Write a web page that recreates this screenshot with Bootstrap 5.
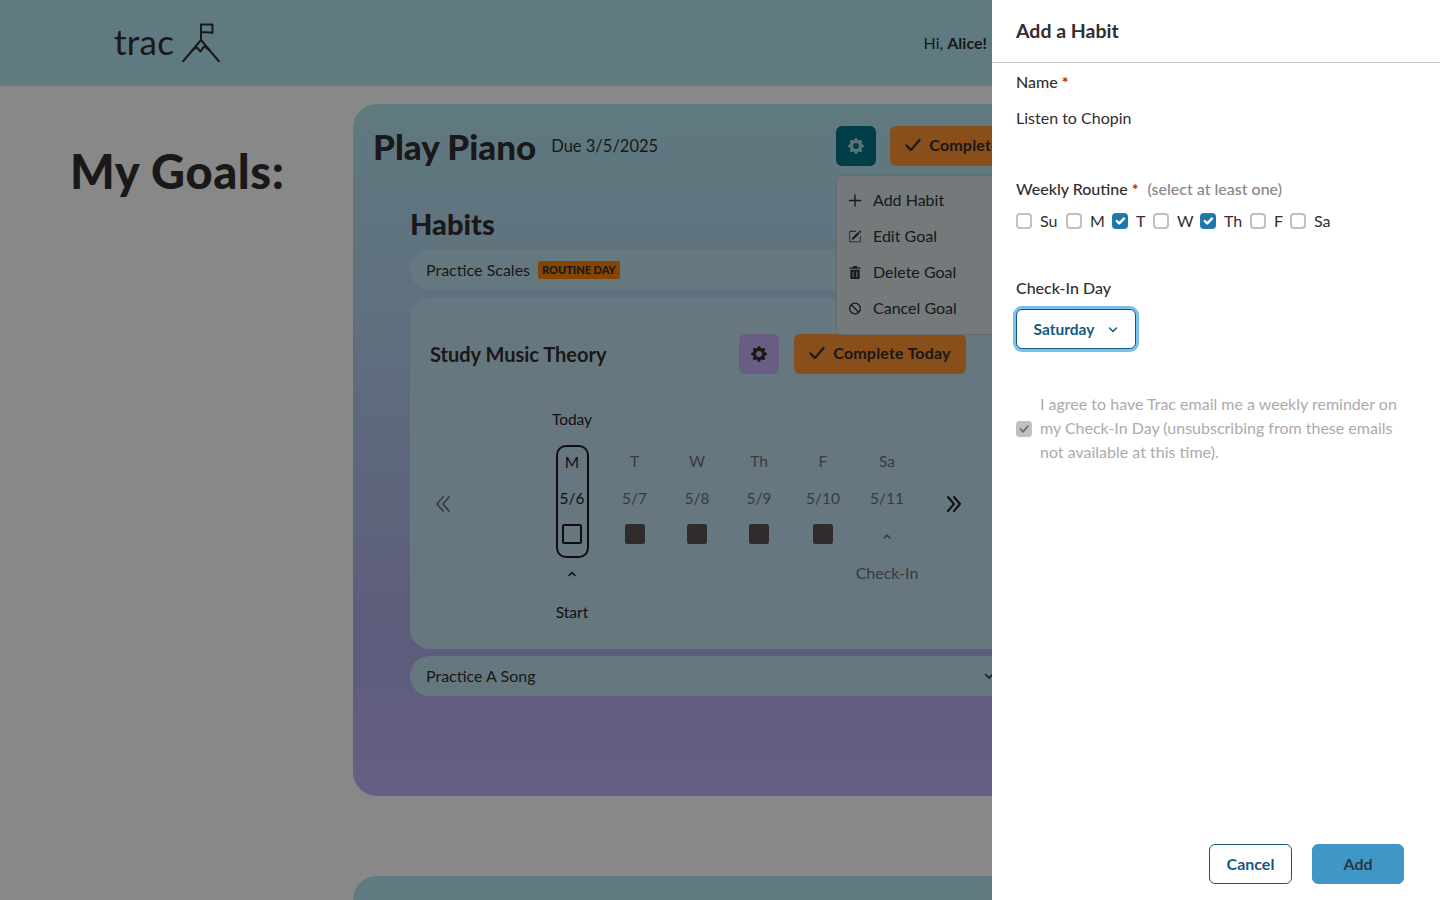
<!DOCTYPE html>
<html lang="en">
<head>
  <meta charset="UTF-8">
  <meta name="viewport" content="width=device-width, initial-scale=1.0">
  <title>Trac - My Goals</title>
  <link href="https://cdn.jsdelivr.net/npm/bootstrap@5.3.0/dist/css/bootstrap.min.css" rel="stylesheet">
  <style>
    body { font-family: "Lato", "Liberation Sans", sans-serif; color: #322e2e; background: #fff; overflow: hidden; height: 900px; }
    .top-bar { height: 86px; background: #b2e5f0; padding-left: 114px; padding-right: 453px; }
    .logo-text { font-size: 35px; line-height: 1; letter-spacing: .3px; margin: -3px 8px 0 0; }
    .logo-mark { margin-top: -2px; }
    .main-wrap { height: 814px; overflow: hidden; }
    .goals-side { width: 353px; padding: 60px 0 0 70px; flex-shrink: 0; }
    .goals-side h1 { font-size: 47px; font-weight: 900; line-height: 50px; margin: 0; color: #322e2e; letter-spacing: .6px; }
    .goal-box { width: 729px; height: 692px; margin-top: 18px; border-radius: 24px; padding: 22px 20px; background: linear-gradient(180deg, #b2e5f0 0%, #b2d2ec 30%, #b0ace8 78%, #bcb4f8 100%); position: relative; }
    .goal-box + .goal-box { height: 100px; margin-top: 80px; background: #b2e5f0; }
    .goal-title { font-size: 35px; font-weight: 900; line-height: 40px; margin: 0; }
    .due-text { font-size: 16.500px; margin-left: 15px; line-height: 40px; }
    .gear-btn { width: 40px; height: 40px; padding: 0; border: 0; border-radius: 6px; display: flex; align-items: center; justify-content: center; }
    .gear-teal { background: #007688; color: #a8dbe2; }
    .gear-purple { background: #c4b0f8; color: #322e2e; }
    .done-btn { height: 40px; width: 172px; border: 0; border-radius: 6px; background: #ff9432; color: #322e2e; font-weight: 700; font-size: 16px; padding: 0 0 2px; letter-spacing: .2px; }
    .btn-pair { gap: 14px; }
    .btn-pair-sub { gap: 15px; }
    .goal-menu { position: absolute; left: 483px; top: 71px; width: 200px; height: 160px; background: #d9e4e9; border: 1px solid #c2c8cb; border-radius: 6px; padding: 6px 0; z-index: 2; }
    .goal-menu div { height: 36px; padding-left: 11px; display: flex; align-items: center; gap: 11px; font-size: 16px; }
    .goal-menu svg { width: 14px; height: 13px; flex-shrink: 0; }
    .habit-area { margin: 41px 52px 0 37px; }
    .habit-area h2 { font-size: 29px; font-weight: 900; line-height: 34px; margin: 0 0 9px; }
    .habit-pill { height: 40px; border-radius: 20px; background: #bee1ee; padding: 0 16px; font-size: 16px; }
    .day-badge { background: #fc8400; color: #322e2e; font-size: 11px; font-weight: 900; line-height: 18px; padding: 0 4px; margin-left: 8px; border-radius: 2px; }
    .habit-open { height: 351px; margin: 8px 0 7px; border-radius: 20px; background: #c0dfee; padding: 36px 44px 0 20px; }
    .habit-open h3 { font-size: 20px; font-weight: 700; margin: 0; }
    .cal-row { margin-top: 33px; }
    .cal-arrow { margin-top: 87px; width: 16px; height: 20px; flex-shrink: 0; }
    .cal-prev { margin-left: 5px; }
    .cal-grid { display: grid; grid-template-columns: 62px 63px 62px 62px 66px 62px; margin: 0 28px 0 90px; }
    .cal-col { display: flex; flex-direction: column; align-items: center; line-height: 24px; font-size: 15.500px; color: #6a7078; white-space: nowrap; }
    .cal-col.other-day { padding-top: 42px; }
    .cal-col .day-name { margin-bottom: 13px; }
    .cal-col .day-date { margin-bottom: 14px; }
    .day-square { width: 20px; height: 20px; background: #5a5353; border-radius: 2px; }
    .today-col { color: #1f1d1d; }
    .today-frame { width: 33px; height: 113px; margin-top: 14px; border: 2px solid #1f1d1d; border-radius: 10px; display: flex; flex-direction: column; align-items: center; padding-top: 3px; }
    .today-frame .day-name { margin-bottom: 12px; }
    .today-box { width: 20px; height: 20px; border: 2px solid #1f1d1d; border-radius: 2px; }
    .up-caret { width: 10px; height: 20px; display: block; }
    .caret-today { margin-top: 7px; }
    .start-label { margin-top: 15px; }
    .checkin-label { margin-top: 17px; font-size: 16px; }
    .panel-head { height: 63px; border-bottom: 1px solid #c8c8c8; padding: 0 24px; display: flex; align-items: center; }
    .panel-head h5 { font-size: 19.500px; font-weight: 700; margin: 0; color: #322e2e; }
    .offcanvas.habit-panel { width: 448px; border-left: 0; color: #322e2e; transform: none; visibility: visible; z-index: 1045; }
    .panel-body { padding: 7px 24px 0; flex-grow: 1; }
    .field-label { font-size: 16px; font-weight: 500; line-height: 24px; margin: 0; }
    .req-star { color: #d4101c; font-weight: 700; }
    .hint-text { color: #8c8585; margin-left: 5px; }
    .name-input { border: 0; padding: 0; font-size: 16px; line-height: 24px; height: 24px; width: 100%; margin: 12px 0 47px; color: #322e2e; outline: 0; display: block; }
    .day-check { width: 16px; height: 16px; margin: 0; border: 2px solid #c4bfbf; border-radius: 3px; flex-shrink: 0; }
    .day-check:checked { background-color: #1f78aa; border: 0; }
    .day-line { margin: 8px 0 43px; height: 24px; font-size: 16px; }
    .day-line label { margin: 0 0 0 8px; }
    .w-su { width: 26px; } .w-m { width: 22px; } .w-t { width: 17px; } .w-w { width: 23px; } .w-th { width: 26px; } .w-f { width: 16px; }
    .check-btn { width: 120px; height: 40px; margin-top: 9px; padding: 1px 0 0; border: 1px solid #125a82; border-radius: 6px; background: #fff; color: #125a82; font-weight: 700; font-size: 15.500px; box-shadow: 0 0 0 3px #7cc0ee; display: flex; align-items: center; justify-content: center; gap: 14px; }
    .agree-row { margin-top: 43px; color: #aeaaaa; font-size: 16px; line-height: 24px; gap: 8px; }
    .agree-check.form-check-input { width: 16px; height: 16px; margin: 1px 0 0; flex-shrink: 0; background-color: #c4bfbf; border-color: #c4bfbf; opacity: 1; border-radius: 3px; }
    .agree-check.form-check-input:checked { background-image: url("data:image/svg+xml,%3csvg xmlns='http://www.w3.org/2000/svg' viewBox='0 0 20 20'%3e%3cpath fill='none' stroke='%23706a6a' stroke-linecap='round' stroke-linejoin='round' stroke-width='2.500' d='m5 10 3.500 4 7-8'/%3e%3c/svg%3e"); }
    .panel-foot { padding: 0 36px 16px 0; gap: 20px; }
    .foot-btn { height: 40px; border-radius: 6px; font-weight: 700; font-size: 16px; padding: 0 0 1px; }
    .foot-cancel { width: 83px; background: #fff; border: 1px solid #125a82; color: #125a82; }
    .foot-add { width: 92px; background: #3f97c8; border: 1px solid #3f97c8; color: #2b3840; }
    .dim-layer { position: fixed; inset: 0; z-index: 1040; background: rgba(0, 0, 0, .467); }
  </style>
</head>
<body>

<nav class="top-bar d-flex align-items-center justify-content-between">
  <a class="d-flex align-items-center text-decoration-none" href="#" style="color:#322e2e">
    <span class="logo-text">trac</span>
    <svg class="logo-mark" width="38" height="40" viewBox="0 0 38 40" fill="none" stroke="#322e2e" stroke-width="2" stroke-linecap="round" stroke-linejoin="round">
      <path d="M19 18V2.500h11.500v8.500c-3.500-1.500-7-.5-11.500-1"/>
      <path d="M1 39.500 19 18l18 21.500"/>
      <path d="m10 28.500 5-3 3.500 4 3.500-5 6 4"/>
    </svg>
  </a>
  <span class="hi-text">Hi, <b>Alice!</b></span>
</nav>

<div class="main-wrap d-flex">
  <div class="goals-side"><h1>My Goals:</h1></div>
  <div>
    <section class="goal-box">
      <div class="d-flex justify-content-between">
        <div class="d-flex">
          <h2 class="goal-title">Play Piano</h2>
          <span class="due-text">Due 3/5/2025</span>
        </div>
        <div class="d-flex btn-pair">
          <button class="gear-btn gear-teal" type="button">
            <svg width="16" height="16" viewBox="0 0 16 16" fill="currentColor"><path d="M9.405 1.050c-.413-1.400-2.397-1.400-2.810 0l-.100.340a1.464 1.464 0 0 1-2.105.872l-.310-.170c-1.283-.698-2.686.705-1.987 1.987l.169.311c.446.820.023 1.841-.872 2.105l-.340.100c-1.400.413-1.400 2.397 0 2.810l.340.100a1.464 1.464 0 0 1 .872 2.105l-.170.310c-.698 1.283.705 2.686 1.987 1.987l.311-.169a1.464 1.464 0 0 1 2.105.872l.100.340c.413 1.400 2.397 1.400 2.810 0l.100-.340a1.464 1.464 0 0 1 2.105-.872l.310.170c1.283.698 2.686-.705 1.987-1.987l-.169-.311a1.464 1.464 0 0 1 .872-2.105l.340-.100c1.400-.413 1.400-2.397 0-2.810l-.340-.100a1.464 1.464 0 0 1-.872-2.105l.170-.310c.698-1.283-.705-2.686-1.987-1.987l-.311.169a1.464 1.464 0 0 1-2.105-.872l-.100-.340zM8 10.930a2.929 2.929 0 1 1 0-5.860 2.929 2.929 0 0 1 0 5.858z"/></svg>
          </button>
          <button class="done-btn d-flex align-items-center justify-content-center gap-2" type="button">
            <svg width="16" height="14" viewBox="0 0 16 14" fill="none" stroke="currentColor" stroke-width="2.200" stroke-linecap="round" stroke-linejoin="round"><path d="m1.500 7.500 4.500 4.500 8.500-10"/></svg>
            Complete Today
          </button>
        </div>
      </div>

      <div class="goal-menu">
        <div><svg viewBox="0 0 14 14" fill="none" stroke="currentColor" stroke-width="1.500" stroke-linecap="round"><path d="M7 1v12M1 7h12"/></svg>Add Habit</div>
        <div><svg viewBox="0 0 16 16" fill="currentColor"><path d="M15.502 1.940a.5.5 0 0 1 0 .706L14.459 3.690l-2-2L13.502.646a.5.5 0 0 1 .707 0l1.293 1.293zm-1.750 2.456-2-2L4.939 9.210a.5.5 0 0 0-.121.196l-.805 2.414a.25.25 0 0 0 .316.316l2.414-.805a.5.5 0 0 0 .196-.120l6.813-6.814z"/><path d="M1 13.500A1.500 1.500 0 0 0 2.500 15h11a1.500 1.500 0 0 0 1.500-1.500v-6a.5.5 0 0 0-1 0v6a.5.5 0 0 1-.5.5h-11a.5.5 0 0 1-.5-.5v-11a.5.5 0 0 1 .5-.5H9a.5.5 0 0 0 0-1H2.500A1.500 1.500 0 0 0 1 2.500v11z"/></svg>Edit Goal</div>
        <div><svg viewBox="0 0 14 14" fill="currentColor"><path d="M5 0h4l.5 1.500H13V3H1V1.500h3.500zM2 4h10v9a1 1 0 0 1-1 1H3a1 1 0 0 1-1-1zm2.500 2v6h1V6zm4 0v6h1V6z"/></svg>Delete Goal</div>
        <div><svg viewBox="0 0 14 14" fill="none" stroke="currentColor" stroke-width="1.400"><circle cx="7" cy="7" r="5.800"/><path d="m2.900 2.900 8.200 8.200"/></svg>Cancel Goal</div>
      </div>

      <div class="habit-area">
        <h2>Habits</h2>
        <div class="habit-pill d-flex align-items-center">Practice Scales <span class="day-badge">ROUTINE DAY</span></div>

        <div class="habit-open">
          <div class="d-flex justify-content-between align-items-center">
            <h3>Study Music Theory</h3>
            <div class="d-flex btn-pair-sub">
              <button class="gear-btn gear-purple" type="button">
                <svg width="16" height="16" viewBox="0 0 16 16" fill="currentColor"><path d="M9.405 1.050c-.413-1.400-2.397-1.400-2.810 0l-.100.340a1.464 1.464 0 0 1-2.105.872l-.310-.170c-1.283-.698-2.686.705-1.987 1.987l.169.311c.446.820.023 1.841-.872 2.105l-.340.100c-1.400.413-1.400 2.397 0 2.810l.340.100a1.464 1.464 0 0 1 .872 2.105l-.170.310c-.698 1.283.705 2.686 1.987 1.987l.311-.169a1.464 1.464 0 0 1 2.105.872l.100.340c.413 1.400 2.397 1.400 2.810 0l.100-.340a1.464 1.464 0 0 1 2.105-.872l.310.170c1.283.698 2.686-.705 1.987-1.987l-.169-.311a1.464 1.464 0 0 1 .872-2.105l.340-.100c1.400-.413 1.400-2.397 0-2.810l-.340-.100a1.464 1.464 0 0 1-.872-2.105l.170-.310c.698-1.283-.705-2.686-1.987-1.987l-.311.169a1.464 1.464 0 0 1-2.105-.872l-.100-.340zM8 10.930a2.929 2.929 0 1 1 0-5.860 2.929 2.929 0 0 1 0 5.858z"/></svg>
              </button>
              <button class="done-btn d-flex align-items-center justify-content-center gap-2" type="button">
                <svg width="16" height="14" viewBox="0 0 16 14" fill="none" stroke="currentColor" stroke-width="2.200" stroke-linecap="round" stroke-linejoin="round"><path d="m1.500 7.500 4.500 4.500 8.500-10"/></svg>
                Complete Today
              </button>
            </div>
          </div>

          <div class="cal-row d-flex">
            <svg class="cal-arrow cal-prev" viewBox="0 0 16 20" fill="none" stroke="#6a7078" stroke-width="1.800" stroke-linecap="round" stroke-linejoin="round"><path d="M8 3 2 10l6 7M14 3l-6 7 6 7"/></svg>
            <div class="cal-grid">
              <div class="cal-col today-col">
                <span>Today</span>
                <div class="today-frame">
                  <span class="day-name">M</span>
                  <span class="day-date">5/6</span>
                  <div class="today-box"></div>
                </div>
                <svg class="up-caret caret-today" viewBox="0 0 10 20" fill="none" stroke="currentColor" stroke-width="1.600" stroke-linecap="round" stroke-linejoin="round"><path d="m2 10.500 3-3 3 3"/></svg>
                <span class="start-label">Start</span>
              </div>
              <div class="cal-col other-day"><span class="day-name">T</span><span class="day-date">5/7</span><div class="day-square"></div></div>
              <div class="cal-col other-day"><span class="day-name">W</span><span class="day-date">5/8</span><div class="day-square"></div></div>
              <div class="cal-col other-day"><span class="day-name">Th</span><span class="day-date">5/9</span><div class="day-square"></div></div>
              <div class="cal-col other-day"><span class="day-name">F</span><span class="day-date">5/10</span><div class="day-square"></div></div>
              <div class="cal-col other-day">
                <span class="day-name">Sa</span><span class="day-date">5/11</span>
                <svg class="up-caret" viewBox="0 0 10 20" fill="none" stroke="currentColor" stroke-width="1.600" stroke-linecap="round" stroke-linejoin="round"><path d="m2 14 3-3 3 3"/></svg>
                <span class="checkin-label">Check-In</span>
              </div>
            </div>
            <svg class="cal-arrow" viewBox="0 0 16 20" fill="none" stroke="#1f1d1d" stroke-width="2" stroke-linecap="round" stroke-linejoin="round"><path d="m2 3 6 7-6 7M8 3l6 7-6 7"/></svg>
          </div>
        </div>

        <div class="habit-pill d-flex align-items-center justify-content-between">
          Practice A Song
          <svg width="10" height="8" viewBox="0 0 10 8" fill="none" stroke="currentColor" stroke-width="1.600" stroke-linecap="round" stroke-linejoin="round"><path d="m1.500 2.500 3.500 3.500 3.500-3.500"/></svg>
        </div>
      </div>
    </section>
    <section class="goal-box"></section>
  </div>
</div>

<div class="dim-layer"></div>
<div class="offcanvas offcanvas-end habit-panel" tabindex="-1">
  <div class="panel-head"><h5>Add a Habit</h5></div>
  <div class="panel-body">
    <p class="field-label">Name <span class="req-star">*</span></p>
    <input class="name-input" type="text" value="Listen to Chopin">

    <p class="field-label">Weekly Routine <span class="req-star">*</span> <span class="hint-text">(select at least one)</span></p>
    <div class="day-line d-flex align-items-center">
      <input class="form-check-input day-check" type="checkbox" id="dSu"><label class="w-su" for="dSu">Su</label>
      <input class="form-check-input day-check" type="checkbox" id="dM"><label class="w-m" for="dM">M</label>
      <input class="form-check-input day-check" type="checkbox" id="dT" checked><label class="w-t" for="dT">T</label>
      <input class="form-check-input day-check" type="checkbox" id="dW"><label class="w-w" for="dW">W</label>
      <input class="form-check-input day-check" type="checkbox" id="dTh" checked><label class="w-th" for="dTh">Th</label>
      <input class="form-check-input day-check" type="checkbox" id="dF"><label class="w-f" for="dF">F</label>
      <input class="form-check-input day-check" type="checkbox" id="dSa"><label for="dSa">Sa</label>
    </div>

    <p class="field-label">Check-In Day</p>
    <button class="check-btn" type="button">
      Saturday
      <svg width="10" height="8" viewBox="0 0 10 8" fill="none" stroke="currentColor" stroke-width="1.500" stroke-linecap="round" stroke-linejoin="round"><path d="m1.500 2 3.500 3.500 3.500-3.500"/></svg>
    </button>

    <div class="agree-row d-flex align-items-center">
      <input class="form-check-input agree-check" type="checkbox" checked disabled>
      <span>I agree to have Trac email me a weekly reminder on my Check-In Day (unsubscribing from these emails not available at this time).</span>
    </div>
  </div>
  <div class="panel-foot d-flex justify-content-end">
    <button class="foot-btn foot-cancel" type="button">Cancel</button>
    <button class="foot-btn foot-add" type="button">Add</button>
  </div>
</div>

<script src="https://cdn.jsdelivr.net/npm/bootstrap@5.3.0/dist/js/bootstrap.bundle.min.js"></script>
</body>
</html>
